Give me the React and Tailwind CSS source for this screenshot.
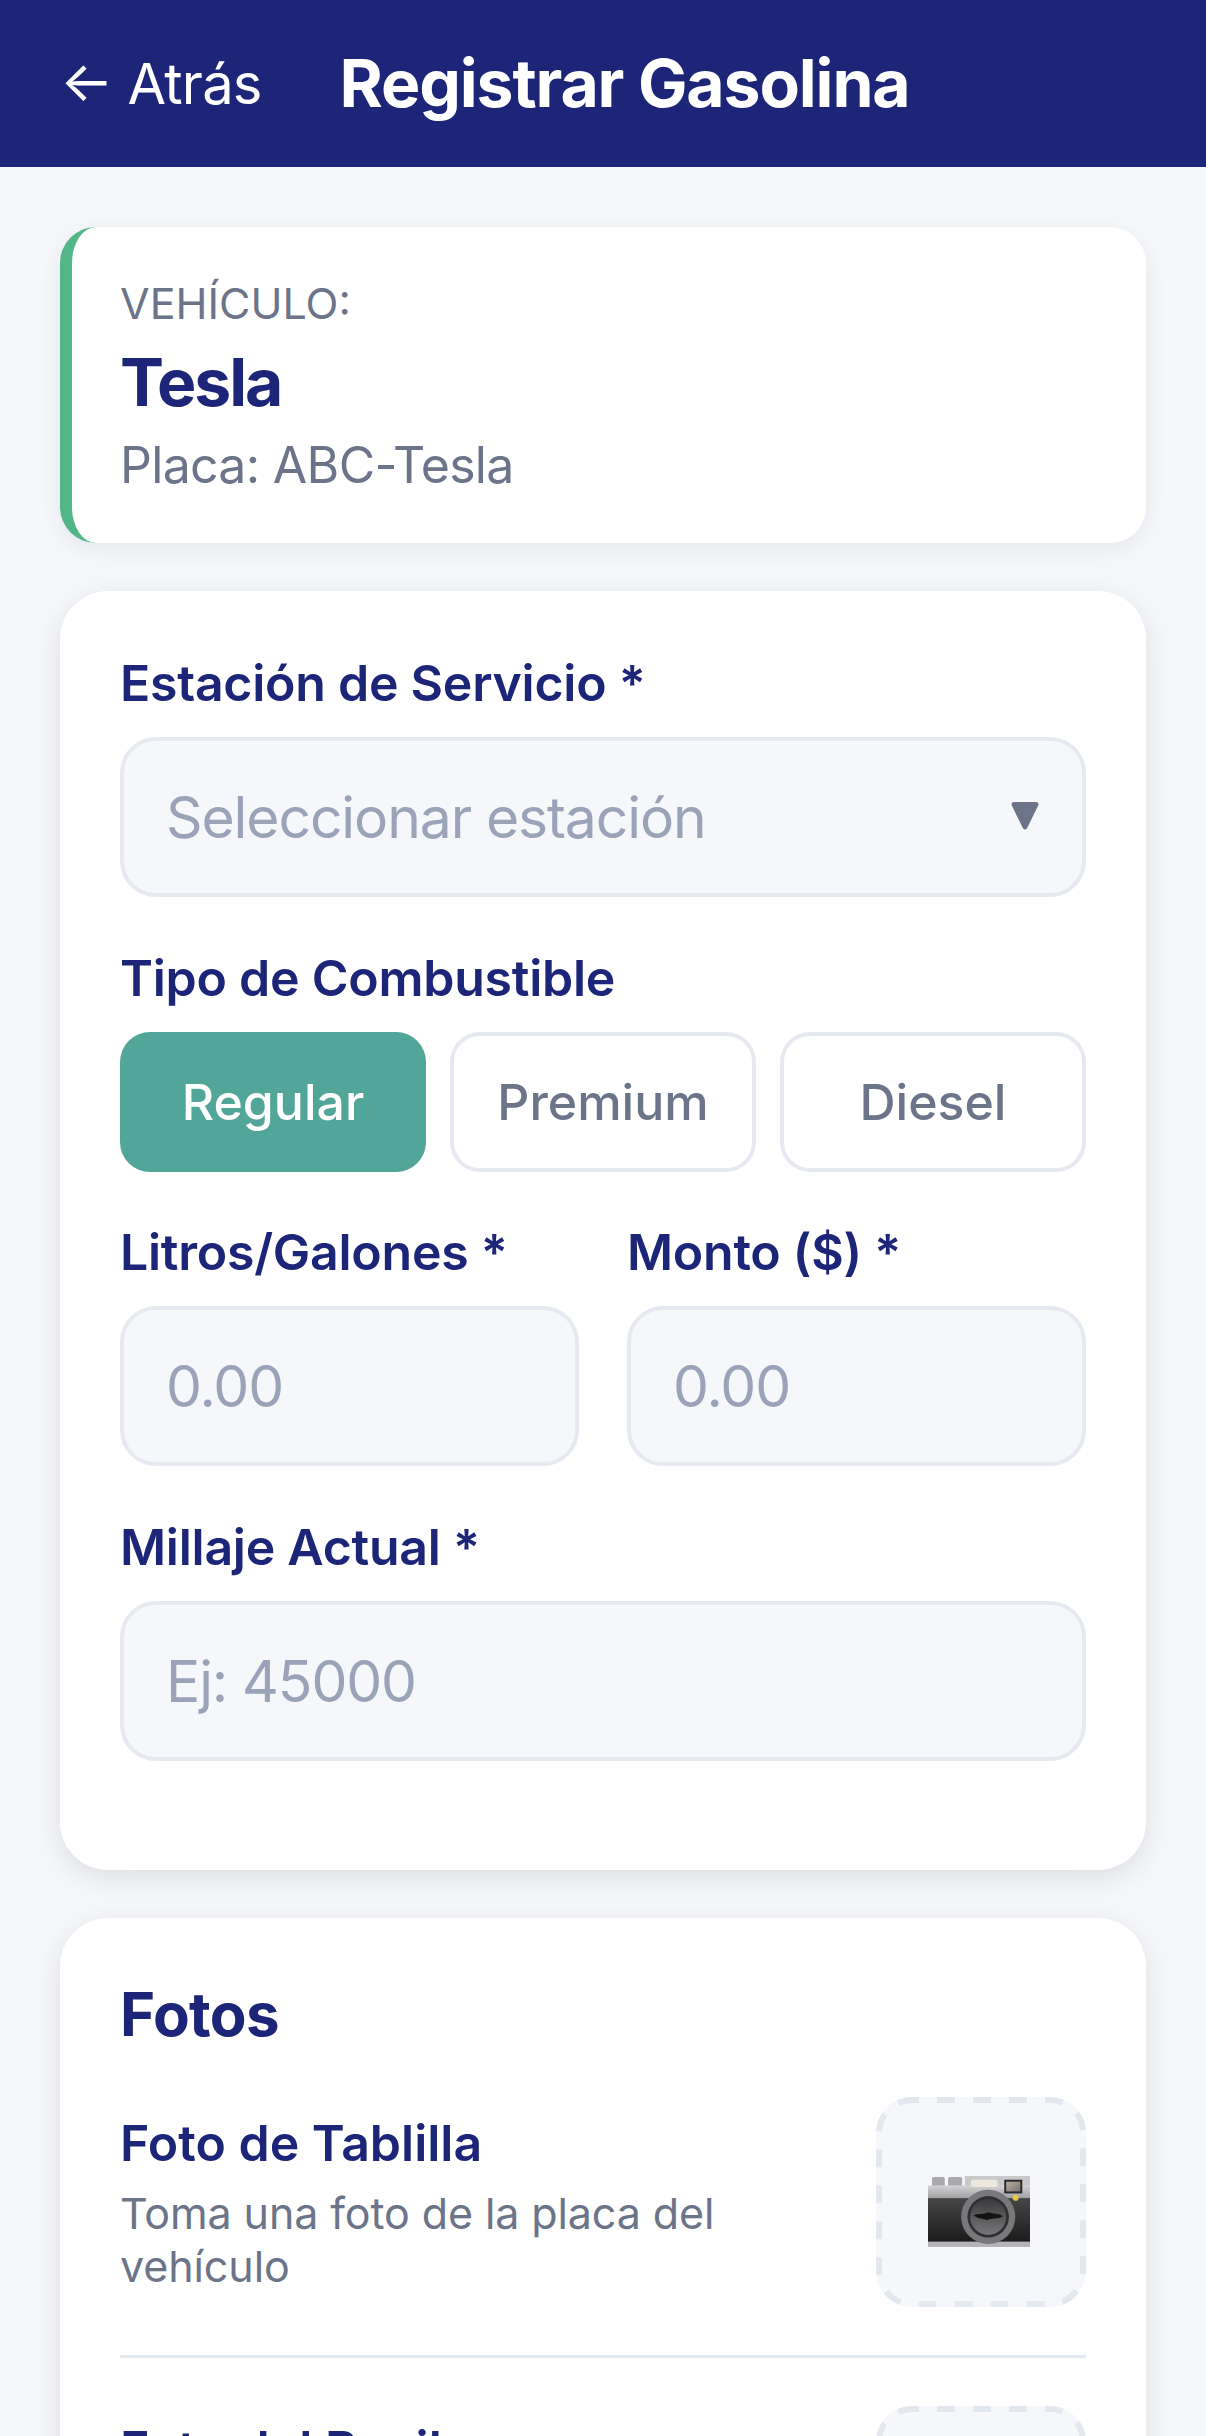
const navy = 'text-[#1d2578]';
const labelCls = `text-[50px] leading-[66px] font-semibold tracking-[-0.25px] ${navy} mb-[21px]`;
const placeholderCls = 'text-[57px] tracking-[-1.1px] text-[#9aa3b8]';

function CameraEmoji() {
  return (
    <svg className="mt-[18px] mr-[5px]" width="102" height="71" viewBox="0 0 305 212">
      <defs>
        <linearGradient id="plate" x1="0" y1="0" x2="0" y2="1">
          <stop offset="0" stopColor="#d4d4d6" />
          <stop offset="1" stopColor="#98989a" />
        </linearGradient>
        <linearGradient id="hull" x1="0" y1="0" x2="0" y2="1">
          <stop offset="0" stopColor="#464646" />
          <stop offset="1" stopColor="#1b1b1b" />
        </linearGradient>
        <linearGradient id="glass" x1="0" y1="0" x2="0" y2="1">
          <stop offset="0" stopColor="#3a3a3c" />
          <stop offset="1" stopColor="#77777a" />
        </linearGradient>
        <linearGradient id="finder" x1="0" y1="0" x2="1" y2="1">
          <stop offset="0" stopColor="#b9ae9f" />
          <stop offset="1" stopColor="#77726c" />
        </linearGradient>
      </defs>
      <rect x="12" y="3" width="38" height="30" rx="5" fill="#a9a9ab" />
      <rect x="60" y="3" width="42" height="30" rx="5" fill="#a9a9ab" />
      <rect x="110" y="0" width="195" height="40" fill="#c9c9cb" />
      <rect x="0" y="28" width="305" height="44" fill="url(#plate)" />
      <rect x="0" y="66" width="305" height="132" fill="url(#hull)" />
      <rect x="0" y="196" width="305" height="16" fill="#b4b4b6" />
      <rect x="128" y="11" width="80" height="22" rx="7" fill="#ece8de" />
      <rect x="228" y="11" width="54" height="41" fill="#2b2b2d" />
      <rect x="234" y="17" width="42" height="29" fill="url(#finder)" />
      <circle cx="262" cy="65" r="9" fill="#e9c63c" />
      <circle cx="180" cy="122" r="81" fill="#78787c" />
      <circle cx="180" cy="122" r="62" fill="#2f2f31" />
      <circle cx="180" cy="122" r="54" fill="url(#glass)" />
      <path d="M136 118 C150 110 165 116 180 108 C195 114 212 110 224 120 C208 130 190 124 176 132 C162 126 150 128 136 118 Z" fill="#141414" />
    </svg>
  );
}

function PhotoTile() {
  return (
    <div className="relative w-[210px] h-[210px] shrink-0 rounded-[36px] bg-[#f5f7fb] flex items-center justify-center">
      {/* dash length of the reference, a css dashed border gives other lengths */}
      <svg className="absolute inset-0" width="210" height="210" viewBox="0 0 210 210" fill="none">
        <rect x="3" y="3" width="204" height="204" rx="33" stroke="#e3e7ee" strokeWidth="6" strokeDasharray="18 18" strokeDashoffset="11" />
      </svg>
      <CameraEmoji />
    </div>
  );
}

function Field({ label, placeholder, caret }) {
  return (
    <div className="flex-1 min-w-0">
      <div className={labelCls}>{label}</div>
      <div className={`h-[160px] pl-[42px] pr-[43px] pt-[2px] flex items-center justify-between rounded-[36px] border-[4px] border-[#e6e9f0] bg-[#f5f7fb] ${placeholderCls}`}>
        {placeholder}
        {caret && (
          <svg className="-mt-[4px]" width="28" height="28" viewBox="0 0 28 28">
            <path d="M3 0 H25 Q28 0 27.4 3 L16.2 26 Q14 29 11.8 26 L0.6 3 Q0 0 3 0 Z" fill="#6c7489" />
          </svg>
        )}
      </div>
    </div>
  );
}

function FuelButton({ children, active }) {
  const look = active
    ? 'bg-[#52a599] text-white'
    : 'border-[4px] border-[#e6e9f0] bg-white text-[#6c7489]';
  return (
    <div className={`h-[140px] rounded-[30px] text-[50px] font-medium flex items-center justify-center ${look}`}>
      {children}
    </div>
  );
}

export default function App() {
  return (
    <div className="h-[2436px] overflow-hidden bg-[#f5f7fb] font-['Inter',sans-serif]">
      <header className="h-[167px] bg-[#1d2578] flex items-center px-[60px] text-white">
        <span className="text-[56px] tracking-[-0.8px]"><span className="inline-block -translate-y-[3px]">←</span> Atrás</span>
        <h1 className="ml-[78px] text-[66px] font-bold tracking-[-1.1px]">Registrar Gasolina</h1>
      </header>

      <main className="px-[60px] pt-[60px] flex flex-col gap-[48px]">
        <section className="h-[316px] rounded-[36px] border-l-[12px] border-[#52b788] bg-white shadow-[0_6px_24px_rgba(0,0,0,0.07)] px-[48px] pt-[46px]">
          <div className="text-[43px] leading-[60px] text-[#6c7489]">VEHÍCULO:</div>
          <div className={`mt-[7px] text-[66px] leading-[84px] font-bold tracking-[-2px] ${navy}`}>Tesla</div>
          <div className="mt-[8px] text-[50px] leading-[66px] tracking-[-0.7px] text-[#6c7489]">Placa: ABC-Tesla</div>
        </section>

        <section className="rounded-[48px] bg-white shadow-[0_8px_30px_rgba(0,0,0,0.1)] px-[60px] pt-[59px] pb-[109px]">
          <Field label="Estación de Servicio *" placeholder="Seleccionar estación" caret />
          <div className={`mt-[48px] ${labelCls}`}>Tipo de Combustible</div>
          <div className="grid grid-cols-3 gap-[24px]">
            <FuelButton active>Regular</FuelButton>
            <FuelButton>Premium</FuelButton>
            <FuelButton>Diesel</FuelButton>
          </div>
          <div className="mt-[47px] flex gap-[48px]">
            <Field label="Litros/Galones *" placeholder="0.00" />
            <Field label="Monto ($) *" placeholder="0.00" />
          </div>
          <div className="mt-[48px]">
            <Field label="Millaje Actual *" placeholder="Ej: 45000" />
          </div>
        </section>

        <section className="rounded-[48px] bg-white shadow-[0_8px_30px_rgba(0,0,0,0.1)] px-[60px] pt-[60px]">
          <h2 className={`text-[60px] leading-[72px] font-bold tracking-[-0.6px] ${navy}`}>Fotos</h2>
          <div className="mt-[47px] pb-[48px] border-b-[3px] border-[#e3e7ee] flex items-center gap-[48px]">
            <div className="flex-1 pb-[6px]">
              <div className={`text-[50px] font-semibold ${navy}`}>Foto de Tablilla</div>
              <div className="mt-[6px] text-[43px] leading-[53px] tracking-[-0.1px] text-[#6c7489]">Toma una foto de la placa del vehículo</div>
            </div>
            <PhotoTile />
          </div>
          <div className="pt-[48px] flex items-start gap-[48px]">
            <div className={`flex-1 mt-[6px] text-[50px] font-semibold ${navy}`}>Foto del Recibo</div>
            <PhotoTile />
          </div>
        </section>
      </main>
    </div>
  );
}
